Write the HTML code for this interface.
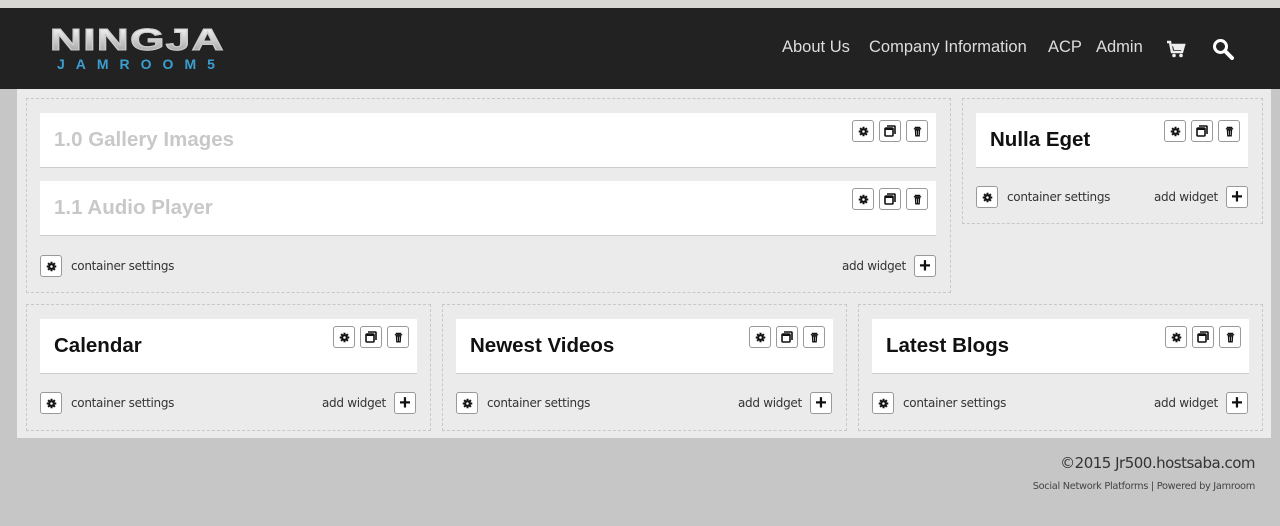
<!DOCTYPE html>
<html><head><style>
*{margin:0;padding:0;box-sizing:border-box}
body{width:1280px;height:526px;background:#c6c6c6;font-family:"Liberation Sans","DejaVu Sans",sans-serif;position:relative;overflow:hidden}
.top{position:absolute;left:0;top:0;width:1280px;height:8px;background:#d9d7d4}
.hdr{position:absolute;left:0;top:8px;width:1280px;height:81px;background:#222}
.logo1{position:absolute;left:50px;top:24px;font:900 31px "Liberation Sans",sans-serif;letter-spacing:1px;line-height:32px;background:linear-gradient(#fff,#999);-webkit-background-clip:text;color:transparent;transform:scaleX(1.42);transform-origin:left;-webkit-text-stroke:1px #ccc}
.logo2{position:absolute;left:57px;top:56px;font:bold 14px "Liberation Sans",sans-serif;letter-spacing:11px;color:#3a9fd0}
.nav{position:absolute;top:38px;font-size:16.5px;color:#ddd;font-family:"Liberation Sans",sans-serif}
.panel{position:absolute;left:17px;top:89px;width:1254px;height:349px;background:#ebebeb}
.c{position:absolute;border:1px dashed #c8c8c8}
.w{position:absolute;background:#fff;border-bottom:1px solid #ccc;height:55px}
.w h2{position:absolute;left:14px;top:15px;font-size:20.5px;font-weight:bold;color:#111;font-family:"Liberation Sans",sans-serif}
.w h2.g{color:#c8c8c8}
.btns{position:absolute;right:8px;top:7px;display:flex;gap:5px}
.b{width:22px;height:22px;border:1px solid #999;border-radius:3px;background:#fff;display:flex;align-items:center;justify-content:center;font-size:12px;color:#111}
.ft{position:absolute;font-size:12px;color:#333;font-family:"DejaVu Sans",sans-serif;letter-spacing:-.3px}
</style></head><body>
<div class="top"></div>
<div class="hdr"></div>
<div class="logo1">NINGJA</div>
<div class="logo2">JAMROOM5</div>
<div class="nav" style="left:782px">About Us</div>
<div class="nav" style="left:869px">Company Information</div>
<div class="nav" style="left:1048px">ACP</div>
<div class="nav" style="left:1096px">Admin</div>
<svg style="position:absolute;left:1166px;top:39px" width="20" height="20" viewBox="0 0 20 20"><path d="M1 3h3l2 10h10l2-7H6" fill="none" stroke="#eee" stroke-width="2.5"/><path d="M7 7h10l-1.5 4H8z" fill="#eee"/><circle cx="8" cy="16.5" r="1.8" fill="#eee"/><circle cx="15" cy="16.5" r="1.8" fill="#eee"/></svg>
<svg style="position:absolute;left:1212px;top:38px" width="22" height="22" viewBox="0 0 22 22"><circle cx="8.5" cy="8.5" r="6" fill="none" stroke="#fff" stroke-width="3"/><path d="M13 13l7 7" stroke="#fff" stroke-width="4" stroke-linecap="round"/></svg>
<div class="panel"></div>

<svg width="0" height="0" style="position:absolute"><defs>
<symbol id="gear" viewBox="0 0 12 12"><circle cx="6" cy="6" r="3.6" fill="#111"/><g stroke="#111" stroke-width="2.2"><path d="M6 0.8v10.4M0.8 6h10.4M2.3 2.3l7.4 7.4M9.7 2.3l-7.4 7.4"/></g><circle cx="6" cy="6" r="1.4" fill="#fff"/></symbol>
<symbol id="win" viewBox="0 0 12 12"><rect x="1" y="3" width="8" height="8" rx="1" fill="none" stroke="#111" stroke-width="1.6"/><path d="M3 1h7.5a.5.5 0 0 1 .5.5V9" fill="none" stroke="#111" stroke-width="1.6"/><path d="M1 4h8" stroke="#111" stroke-width="2"/></symbol>
<symbol id="trash" viewBox="0 0 12 12"><path d="M3 1.5h6M2 3h8" stroke="#111" stroke-width="1.4"/><path d="M3 3.5h6l-.5 8h-5z" fill="#111"/><path d="M5 5v5M7 5v5" stroke="#fff" stroke-width=".6"/></symbol>
</defs></svg>

<div class="c" style="left:26px;top:98px;width:925px;height:195px"></div>
<div class="w" style="left:40px;top:113px;width:896px"><h2 class="g">1.0 Gallery Images</h2><div class="btns"><div class="b"><svg width="11" height="11"><use href="#gear"/></svg></div><div class="b"><svg width="12" height="12"><use href="#win"/></svg></div><div class="b"><svg width="11" height="11"><use href="#trash"/></svg></div></div></div>
<div class="w" style="left:40px;top:181px;width:896px"><h2 class="g">1.1 Audio Player</h2><div class="btns"><div class="b"><svg width="11" height="11"><use href="#gear"/></svg></div><div class="b"><svg width="12" height="12"><use href="#win"/></svg></div><div class="b"><svg width="11" height="11"><use href="#trash"/></svg></div></div></div>
<div class="b" style="position:absolute;left:40px;top:255px"><svg width="11" height="11"><use href="#gear"/></svg></div>
<div class="ft" style="left:71px;top:259px">container settings</div>
<div class="ft" style="left:842px;top:259px">add widget</div>
<div class="b" style="position:absolute;left:914px;top:255px;font-size:20px;font-weight:bold">+</div>

<div class="c" style="left:962px;top:98px;width:301px;height:126px"></div>
<div class="w" style="left:976px;top:113px;width:272px"><h2>Nulla Eget</h2><div class="btns"><div class="b"><svg width="11" height="11"><use href="#gear"/></svg></div><div class="b"><svg width="12" height="12"><use href="#win"/></svg></div><div class="b"><svg width="11" height="11"><use href="#trash"/></svg></div></div></div>
<div class="b" style="position:absolute;left:976px;top:186px"><svg width="11" height="11"><use href="#gear"/></svg></div>
<div class="ft" style="left:1007px;top:190px">container settings</div>
<div class="ft" style="left:1154px;top:190px">add widget</div>
<div class="b" style="position:absolute;left:1226px;top:186px;font-size:20px;font-weight:bold">+</div>

<div class="c" style="left:26px;top:304px;width:405px;height:127px"></div>
<div class="w" style="left:40px;top:319px;width:377px"><h2>Calendar</h2><div class="btns"><div class="b"><svg width="11" height="11"><use href="#gear"/></svg></div><div class="b"><svg width="12" height="12"><use href="#win"/></svg></div><div class="b"><svg width="11" height="11"><use href="#trash"/></svg></div></div></div>
<div class="b" style="position:absolute;left:40px;top:392px"><svg width="11" height="11"><use href="#gear"/></svg></div>
<div class="ft" style="left:71px;top:396px">container settings</div>
<div class="ft" style="left:322px;top:396px">add widget</div>
<div class="b" style="position:absolute;left:394px;top:392px;font-size:20px;font-weight:bold">+</div>

<div class="c" style="left:442px;top:304px;width:405px;height:127px"></div>
<div class="w" style="left:456px;top:319px;width:377px"><h2>Newest Videos</h2><div class="btns"><div class="b"><svg width="11" height="11"><use href="#gear"/></svg></div><div class="b"><svg width="12" height="12"><use href="#win"/></svg></div><div class="b"><svg width="11" height="11"><use href="#trash"/></svg></div></div></div>
<div class="b" style="position:absolute;left:456px;top:392px"><svg width="11" height="11"><use href="#gear"/></svg></div>
<div class="ft" style="left:487px;top:396px">container settings</div>
<div class="ft" style="left:738px;top:396px">add widget</div>
<div class="b" style="position:absolute;left:810px;top:392px;font-size:20px;font-weight:bold">+</div>

<div class="c" style="left:858px;top:304px;width:405px;height:127px"></div>
<div class="w" style="left:872px;top:319px;width:377px"><h2>Latest Blogs</h2><div class="btns"><div class="b"><svg width="11" height="11"><use href="#gear"/></svg></div><div class="b"><svg width="12" height="12"><use href="#win"/></svg></div><div class="b"><svg width="11" height="11"><use href="#trash"/></svg></div></div></div>
<div class="b" style="position:absolute;left:872px;top:392px"><svg width="11" height="11"><use href="#gear"/></svg></div>
<div class="ft" style="left:903px;top:396px">container settings</div>
<div class="ft" style="left:1154px;top:396px">add widget</div>
<div class="b" style="position:absolute;left:1226px;top:392px;font-size:20px;font-weight:bold">+</div>

<div style="position:absolute;right:25px;top:454px;font-size:15px;color:#333;font-family:'DejaVu Sans',sans-serif;letter-spacing:-.5px">©2015 Jr500.hostsaba.com</div>
<div style="position:absolute;right:25px;top:481px;font-size:9.8px;color:#444;font-family:'DejaVu Sans',sans-serif;letter-spacing:-.3px">Social Network Platforms | Powered by Jamroom</div>
</body></html>
